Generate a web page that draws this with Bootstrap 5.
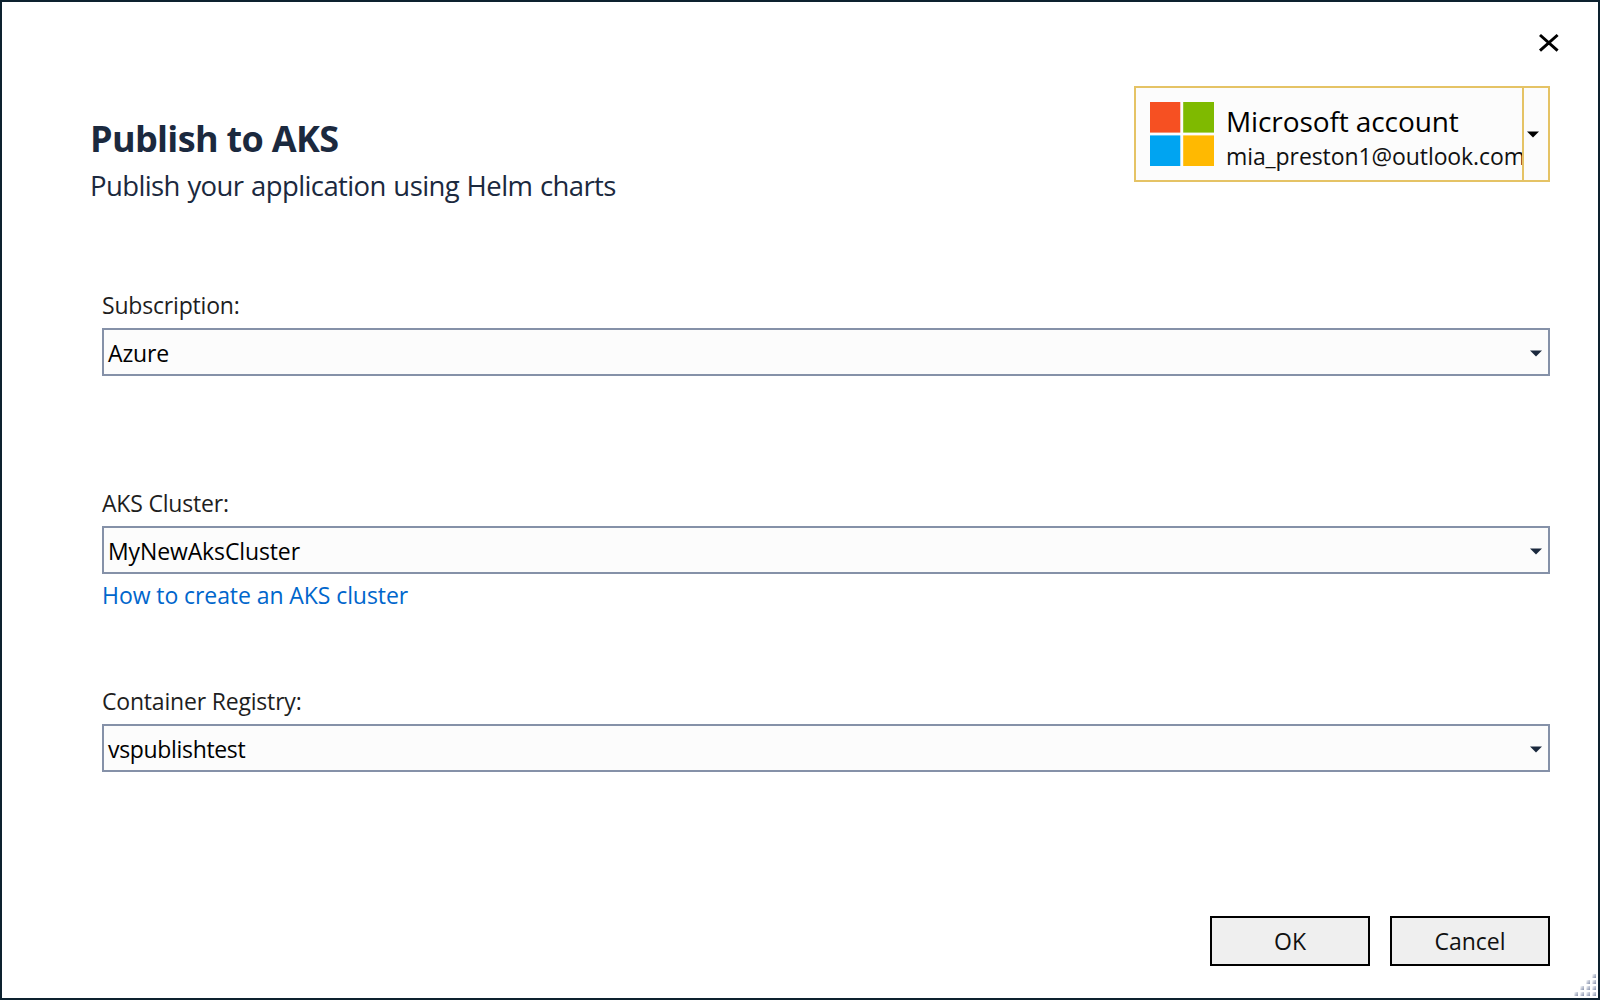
<!DOCTYPE html>
<html lang="en">
<head>
<meta charset="utf-8">
<title>Publish to AKS</title>
<link href="https://cdn.jsdelivr.net/npm/bootstrap@5.3.0/dist/css/bootstrap.min.css" rel="stylesheet">
<style>
  body { font-family: "Open Sans", "Noto Sans", sans-serif; font-size: 23px; line-height: 32px; color: #1e1e1e; background: #fff; }
  .dialog { width: 1600px; height: 1000px; border: 2px solid #0d212f; padding: 31px 48px 32.5px 88px; overflow: hidden; }
  .close-btn { width: 24px; height: 20px; margin-right: -11px; line-height: 0; }
  .head-row { height: 96px; margin-top: 33px; }
  .heading-block { padding-top: 29px; color: #1b293e; }
  .dlg-title { font-size: 36px; line-height: 48px; font-weight: 700; letter-spacing: -.67px; margin: 0 0 4px; }
  .dlg-subtitle { font-size: 27.5px; line-height: 38px; letter-spacing: -.6px; word-spacing: 1px; margin: 0; }
  .account { width: 416px; height: 96px; border: 2px solid #e5c365; background: #fcfcfc; color: #000; }
  .account-main { width: 386px; padding: 14px 0 0 14px; }
  .account-text { margin-left: 12px; padding-top: 1px; white-space: nowrap; }
  .account-name { font-size: 28px; line-height: 36px; letter-spacing: -.1px; margin-bottom: 1px; }
  .account-mail { letter-spacing: -.09px; color: #111; }
  .account-drop { width: 28px; border-left: 2px solid #e5c365; padding: 43px 0 0 3px; line-height: 0; }
  .fields { margin: 107px 0 0 12px; }
  .field { height: 198px; }
  .field label { display: block; margin-bottom: 7px; letter-spacing: -.19px; }
  .combo { height: 48px; border: 2px solid #8591a8; background: #fcfcfc; color: #000; padding: 2px 6px 0 4px; }
  .combo span { letter-spacing: -.12px; }
  .combo .tight { letter-spacing: -.33px; }
  .help-link { display: inline-block; margin-top: 5px; color: #0066cc; text-decoration: none; letter-spacing: -.08px; }
  .dlg-footer { gap: 20px; }
  .dlg-btn { width: 160px; height: 50px; border: 2px solid #000; border-radius: 0; background: #efefef; color: #111; font-size: 23px; line-height: 32px; padding: 0; }
  .grip { right: 2px; bottom: 2px; }
</style>
<script src="https://cdn.jsdelivr.net/npm/bootstrap@5.3.0/dist/js/bootstrap.bundle.min.js"></script>
</head>
<body>
<main class="dialog position-relative d-flex flex-column">
  <div class="d-flex justify-content-end">
    <button class="close-btn btn p-0 border-0" aria-label="Close">
      <svg width="24" height="20" viewBox="0 0 24 20"><path d="M3 2 L20.6 17.6 M20.6 2 L3 17.6" stroke="#000" stroke-width="3" fill="none"/></svg>
    </button>
  </div>
  <header class="head-row d-flex justify-content-between">
    <div class="heading-block">
      <h1 class="dlg-title">Publish to AKS</h1>
      <p class="dlg-subtitle">Publish your application using Helm charts</p>
    </div>
    <div class="account d-flex">
      <div class="account-main d-flex">
        <svg class="flex-shrink-0" width="64" height="64" viewBox="0 0 64 64"><path fill="#f65022" d="M0 0h30.3v30.6H0z"/><path fill="#7fba00" d="M33.2 0H64v30.6H33.2z"/><path fill="#00a4f1" d="M0 33.4h30.3V64H0z"/><path fill="#ffb901" d="M33.2 33.4H64V64H33.2z"/></svg>
        <div class="account-text">
          <div class="account-name">Microsoft account</div>
          <div class="account-mail">mia_preston1@outlook.com</div>
        </div>
      </div>
      <div class="account-drop"><svg width="12" height="7" viewBox="0 0 12 7"><path d="M0 .5h12L6 6.5z"/></svg></div>
    </div>
  </header>
  <section class="fields">
    <div class="field">
      <label>Subscription:</label>
      <div class="combo d-flex justify-content-between align-items-center"><span>Azure</span><svg width="12" height="7" viewBox="0 0 12 7"><path fill="#1b293e" d="M0 .5h12L6 6.5z"/></svg></div>
    </div>
    <div class="field">
      <label>AKS Cluster:</label>
      <div class="combo d-flex justify-content-between align-items-center"><span>MyNewAksCluster</span><svg width="12" height="7" viewBox="0 0 12 7"><path fill="#1b293e" d="M0 .5h12L6 6.5z"/></svg></div>
      <a class="help-link" href="#">How to create an AKS cluster</a>
    </div>
    <div class="field">
      <label>Container Registry:</label>
      <div class="combo d-flex justify-content-between align-items-center"><span class="tight">vspublishtest</span><svg width="12" height="7" viewBox="0 0 12 7"><path fill="#1b293e" d="M0 .5h12L6 6.5z"/></svg></div>
    </div>
  </section>
  <footer class="dlg-footer d-flex justify-content-end mt-auto">
    <button class="dlg-btn btn">OK</button>
    <button class="dlg-btn btn">Cancel</button>
  </footer>
  <svg class="grip position-absolute" width="22" height="23" viewBox="0 0 22 23">
    <defs>
      <linearGradient id="dot" x1="0" y1="0" x2="1" y2="1"><stop offset=".1" stop-color="#eef0f4"/><stop offset="1" stop-color="#8690ab"/></linearGradient>
      <rect id="d" width="3.6" height="4" fill="url(#dot)"/>
    </defs>
    <use href="#d" x="18.4" y="1"/>
    <use href="#d" x="12.4" y="7"/><use href="#d" x="18.4" y="7"/>
    <use href="#d" x="6.4" y="13"/><use href="#d" x="12.4" y="13"/><use href="#d" x="18.4" y="13"/>
    <use href="#d" x=".4" y="19"/><use href="#d" x="6.4" y="19"/><use href="#d" x="12.4" y="19"/><use href="#d" x="18.4" y="19"/>
  </svg>
</main>
</body>
</html>
